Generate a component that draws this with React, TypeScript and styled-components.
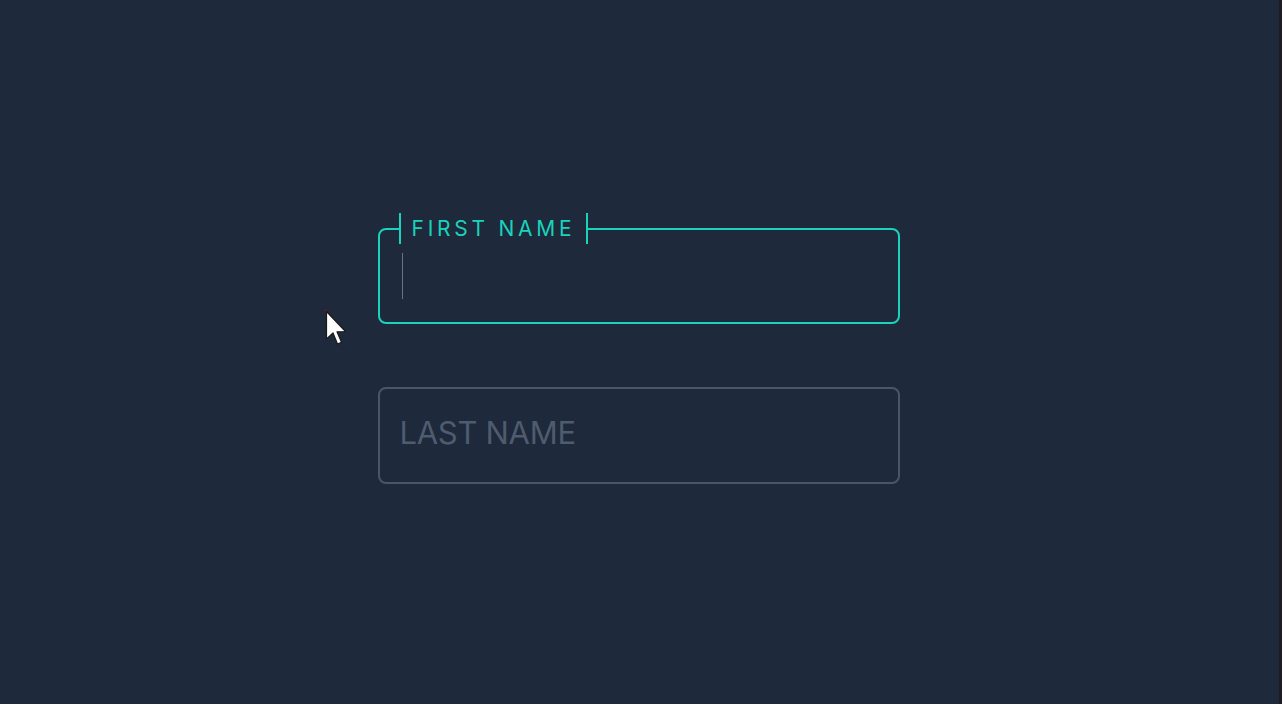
import React from "react";
import styled, { createGlobalStyle } from "styled-components";

const Global = createGlobalStyle`
  html, body { margin: 0; padding: 0; background: #1e293b; }
  body { font-family: Inter, "Noto Sans", sans-serif; }
`;

const Page = styled.div`
  display: flex;
  width: 1282px;
  height: 704px;
  overflow: hidden;
`;

const Main = styled.main`
  position: relative;
  flex: 1;
  display: flex;
  flex-direction: column;
  align-items: center;
  padding-top: 228px;
  padding-right: 2px;
  gap: 63px;
  background: #1e293b;
`;

const Strip = styled.div`
  width: 3px;
  background: #1b1d22;
`;

const Field = styled.div<{ $active?: boolean }>`
  position: relative;
  box-sizing: border-box;
  width: 522px;
  height: ${(p) => (p.$active ? 96 : 97)}px;
  border: 2px solid ${(p) => (p.$active ? "#19d3bb" : "#4a5568")};
  border-radius: 8px;
  display: flex;
  align-items: center;
  padding-left: 20px;
`;

const FloatLabel = styled.span`
  position: absolute;
  top: -17px;
  left: 19px;
  height: 31px;
  box-sizing: border-box;
  display: flex;
  align-items: center;
  padding: 0 11px 0 11px;
  border-left: 2px solid #19d3bb;
  border-right: 2px solid #19d3bb;
  background: #1e293b;
  color: #19d3bb;
  font-size: 21px;
  letter-spacing: 3.75px;
  font-weight: 400;
`;

const Caret = styled.span`
  width: 1px;
  height: 46px;
  margin-left: 2px;
  background: #6b7280;
`;

const Placeholder = styled.span`
  color: #4f5b6e;
  font-size: 31px;
  font-weight: 400;
  letter-spacing: -0.3px;
  padding-bottom: 6px;
`;

const Pointer = styled.svg`
  position: absolute;
  left: 324px;
  top: 309px;
`;

export default function App() {
  return (
    <>
      <Global />
      <Page>
        <Main>
          <Field $active>
            <FloatLabel>FIRST NAME</FloatLabel>
            <Caret />
          </Field>
          <Field>
            <Placeholder>LAST NAME</Placeholder>
          </Field>
          <Pointer width="26" height="40" viewBox="0 0 26 40">
            <circle cx="2" cy="2" r="1.3" fill="#7a1020" />
            <path
              d="M2.5 2.5 L2.5 30 L9 24 L13.5 35 L17.5 33.3 L13 22.8 L21.5 22.5 Z"
              fill="#ffffff"
              stroke="#1a1a1a"
              strokeWidth="1.2"
              strokeLinejoin="round"
            />
          </Pointer>
        </Main>
        <Strip />
      </Page>
    </>
  );
}
